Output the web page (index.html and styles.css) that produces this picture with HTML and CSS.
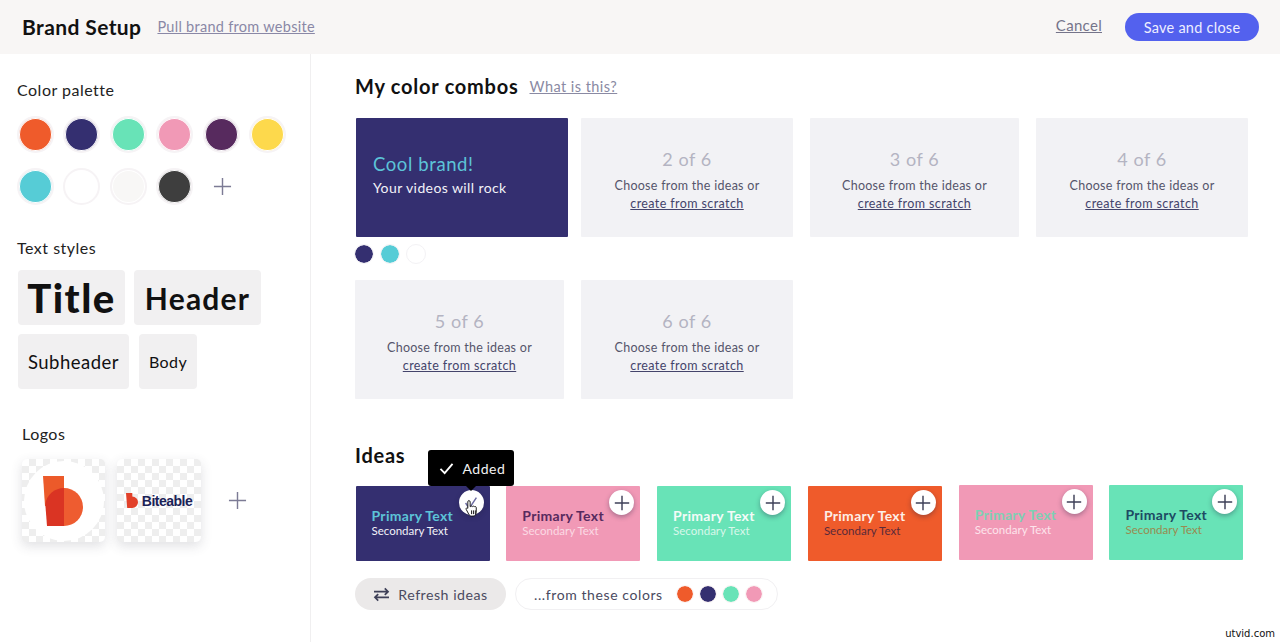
FILE: index.html
```html
<!DOCTYPE html>
<html lang="en">
<head>
    <meta charset="UTF-8">
    <meta name="viewport" content="width=device-width, initial-scale=1.0">
    <title>Brand Setup</title>
    <link rel="stylesheet" href="styles.css">
</head>
<body>
    <header class="topbar">
        <h1 class="topbar-title">Brand Setup</h1>
        <a class="topbar-link" href="#">Pull brand from website</a>
        <a class="topbar-cancel" href="#">Cancel</a>
        <button class="save-btn">Save and close</button>
    </header>
    <div class="page">
        <aside class="sidebar">
            <h2 class="side-title">Color palette</h2>
            <div class="palette">
                <span class="dot dot-orange"></span>
                <span class="dot dot-navy"></span>
                <span class="dot dot-mint"></span>
                <span class="dot dot-pink"></span>
                <span class="dot dot-plum"></span>
                <span class="dot dot-yellow"></span>
                <span class="dot dot-teal"></span>
                <span class="dot dot-white"></span>
                <span class="dot dot-offwhite"></span>
                <span class="dot dot-charcoal"></span>
                <svg class="plus-icon" viewBox="0 0 20 20"><path d="M10 1v18M1 10h18"/></svg>
            </div>
            <h2 class="side-title side-title-text">Text styles</h2>
            <div class="chips">
                <div class="chip chip-title">Title</div>
                <div class="chip chip-header">Header</div>
                <div class="chip chip-sub">Subheader</div>
                <div class="chip chip-body">Body</div>
            </div>
            <h2 class="side-title side-title-logos">Logos</h2>
            <div class="logos">
                <div class="logo-tile">
                    <div class="logo-round">
                        <svg class="logo-b" viewBox="0 0 40 50">
                            <path d="M0 0H21V30H2Z" fill="#ec5a2a"/>
                            <path d="M21 12A19 19 0 0 1 21 50Z" fill="#ee5c30"/>
                            <path d="M21 12A19 19 0 0 0 2.300 28L4 50H21Z" fill="#da3423"/>
                        </svg>
                    </div>
                </div>
                <div class="logo-tile logo-tile-wide">
                    <svg class="logo-mini" viewBox="0 0 40 50">
                        <path d="M0 0H21V12A19 19 0 0 1 21 50H4Z" fill="#e2412a"/>
                    </svg>
                    <span class="logo-word">Biteable</span>
                </div>
                <svg class="plus-icon plus-logos" viewBox="0 0 20 20"><path d="M10 1v18M1 10h18"/></svg>
            </div>
        </aside>
        <main class="content">
            <div class="heading-row">
                <h2 class="heading">My color combos</h2>
                <a class="heading-link" href="#">What is this?</a>
            </div>
            <div class="combo-row">
                <div class="combo-col">
                    <div class="combo combo-filled">
                        <div class="combo-primary">Cool brand!</div>
                        <div class="combo-secondary">Your videos will rock</div>
                    </div>
                    <div class="mini-dots">
                        <span class="mini-dot dot-navy"></span>
                        <span class="mini-dot dot-teal"></span>
                        <span class="mini-dot dot-white"></span>
                    </div>
                </div>
                <div class="combo combo-empty">
                    <div class="combo-count">2 of 6</div>
                    <p class="combo-hint">Choose from the ideas or<br><a href="#">create from scratch</a></p>
                </div>
                <div class="combo combo-empty combo-narrow">
                    <div class="combo-count">3 of 6</div>
                    <p class="combo-hint">Choose from the ideas or<br><a href="#">create from scratch</a></p>
                </div>
                <div class="combo combo-empty">
                    <div class="combo-count">4 of 6</div>
                    <p class="combo-hint">Choose from the ideas or<br><a href="#">create from scratch</a></p>
                </div>
            </div>
            <div class="combo-row combo-row-second">
                <div class="combo combo-empty combo-narrow">
                    <div class="combo-count">5 of 6</div>
                    <p class="combo-hint">Choose from the ideas or<br><a href="#">create from scratch</a></p>
                </div>
                <div class="combo combo-empty">
                    <div class="combo-count">6 of 6</div>
                    <p class="combo-hint">Choose from the ideas or<br><a href="#">create from scratch</a></p>
                </div>
            </div>
            <h2 class="heading heading-ideas">Ideas</h2>
            <div class="idea-row">
                <div class="idea idea-navy">
                    <div class="tooltip">
                        <svg class="tooltip-check" viewBox="0 0 16 14"><path d="M1.500 7.500l4.500 4.500 8.500-10"/></svg>
                        Added
                    </div>
                    <div class="idea-primary">Primary Text</div>
                    <div class="idea-secondary">Secondary Text</div>
                    <div class="idea-add">
                        <svg viewBox="0 0 20 20"><path class="added-check" d="M4 10l4 6 8-12"/></svg>
                    </div>
                    <svg class="hand-cursor" viewBox="0 0 16 20">
                        <path d="M4 1.500c1 0 1.500.7 1.500 1.500v5h.6c.3-.8 1.700-.8 2 0 .4-.7 1.700-.7 2 .1.500-.5 1.900-.3 1.900 1v5c0 2-1.200 4-3.300 4H7c-1.500 0-2.300-1-3-2L1.300 11c-.7-1.200.8-2.200 1.700-1.200V3c0-.8.400-1.500 1-1.500z" fill="#fff" stroke="#111" stroke-width="1"/>
                        <path d="M7 12v4M9 12v4M11 12v4" stroke="#111" stroke-width="1"/>
                    </svg>
                </div>
                <div class="idea idea-pink">
                    <div class="idea-primary text-plum">Primary Text</div>
                    <div class="idea-secondary text-lightpink">Secondary Text</div>
                    <div class="idea-add"><svg viewBox="0 0 20 20"><path d="M10 2v16M2 10h16"/></svg></div>
                </div>
                <div class="idea idea-mint">
                    <div class="idea-primary text-white">Primary Text</div>
                    <div class="idea-secondary text-lightmint">Secondary Text</div>
                    <div class="idea-add"><svg viewBox="0 0 20 20"><path d="M10 2v16M2 10h16"/></svg></div>
                </div>
                <div class="idea idea-orange">
                    <div class="idea-primary text-cream">Primary Text</div>
                    <div class="idea-secondary text-maroon">Secondary Text</div>
                    <div class="idea-add"><svg viewBox="0 0 20 20"><path d="M10 2v16M2 10h16"/></svg></div>
                </div>
                <div class="idea idea-pink idea-raised">
                    <div class="idea-primary text-mint">Primary Text</div>
                    <div class="idea-secondary text-lightpink2">Secondary Text</div>
                    <div class="idea-add"><svg viewBox="0 0 20 20"><path d="M10 2v16M2 10h16"/></svg></div>
                </div>
                <div class="idea idea-mint idea-raised">
                    <div class="idea-primary text-deep">Primary Text</div>
                    <div class="idea-secondary text-olive">Secondary Text</div>
                    <div class="idea-add"><svg viewBox="0 0 20 20"><path d="M10 2v16M2 10h16"/></svg></div>
                </div>
            </div>
            <div class="idea-tools">
                <button class="refresh-btn">
                    <svg viewBox="0 0 18 16"><path d="M1 5h15M12.500 1.500L16 5l-3.500 3.500M17 11H2M5.500 7.500L2 11l3.500 3.500"/></svg>
                    Refresh ideas
                </button>
                <div class="from-pill">
                    <span class="from-label">...from these colors</span>
                    <span class="from-dot dot-orange"></span>
                    <span class="from-dot dot-navy"></span>
                    <span class="from-dot dot-mint"></span>
                    <span class="from-dot dot-pink"></span>
                </div>
            </div>
        </main>
    </div>
    <div class="watermark">utvid.com</div>
</body>
</html>
```
FILE: styles.css
```css
*{
    margin: 0;
    padding: 0;
    box-sizing: border-box;
}
body{
    width: 100%;
    height: 642px;
    overflow: hidden;
    background-color: #fff;
    font-family: "Lato", "Noto Sans", sans-serif;
    color: #111;
    position: relative;
}
.topbar{
    height: 54px;
    background-color: #f8f6f5;
    display: flex;
    align-items: center;
    padding: 0 21px 0 22px;
}
.topbar-title{
    margin-top: -2px;
    font-size: 21px;
    font-weight: 700;
    letter-spacing: 0.4px;
    color: #111;
}
.topbar-link{
    margin: -2px 0 0 16px;
    font-size: 14.500px;
    letter-spacing: 0.28px;
    color: #8a88a6;
}
.topbar-cancel{
    margin: -4px 0 0 auto;
    font-size: 15px;
    letter-spacing: 0.3px;
    color: #75748a;
}
.save-btn{
    margin-left: 23px;
    width: 134px;
    height: 28px;
    border: 0;
    border-radius: 14px;
    background-color: #5361ee;
    color: #eef;
    font-family: inherit;
    font-size: 14.500px;
    letter-spacing: 0.25px;
}
.page{
    display: flex;
    height: 588px;
}
.sidebar{
    width: 311px;
    flex-shrink: 0;
    border-right: 1px solid #f0eff0;
    padding: 26px 0 0 17px;
}
.side-title{
    font-size: 16px;
    font-weight: 400;
    letter-spacing: 0.5px;
    line-height: 20px;
    color: #222;
}
.side-title-text{
    margin-top: 33px;
}
.side-title-logos{
    margin-top: 35px;
    margin-left: 5px;
}
.palette{
    margin-top: 16px;
    width: 280px;
    display: flex;
    flex-wrap: wrap;
    align-items: center;
    gap: 15px 9.400px;
}
.dot{
    width: 37px;
    height: 37px;
    border-radius: 50%;
    border: 2px solid #f6f3f5;
    background-clip: padding-box;
    box-shadow: inset 0 0 0 1px #fff;
}
.dot-orange{ background-color: #ef5b2b; }
.dot-navy{ background-color: #342f70; }
.dot-mint{ background-color: #68e3b7; }
.dot-pink{ background-color: #f199b6; }
.dot-plum{ background-color: #572a5e; }
.dot-yellow{ background-color: #fdd94c; }
.dot-teal{ background-color: #56ccd6; }
.dot-white{ background-color: #fff; }
.dot-offwhite{ background-color: #f8f7f6; }
.dot-charcoal{ background-color: #3e3e3e; }
.plus-icon{
    width: 19px;
    height: 19px;
    margin-left: 10px;
    fill: none;
    stroke: #7c7b95;
    stroke-width: 1.500;
}
.chips{
    margin: 12px 0 0 1px;
    width: 270px;
    display: flex;
    flex-wrap: wrap;
    gap: 9px;
}
.chip{
    height: 55px;
    border-radius: 4px;
    background-color: #f1f0f1;
    display: flex;
    align-items: center;
    justify-content: center;
    color: #111;
}
.chip-title{
    width: 107px;
    font-size: 40px;
    font-weight: 900;
    letter-spacing: 1.500px;
}
.chip-header{
    width: 127px;
    font-size: 30px;
    font-weight: 700;
    letter-spacing: 1.200px;
}
.chip-sub{
    width: 111px;
    font-size: 18.500px;
    letter-spacing: 0.5px;
}
.chip-body{
    width: 58px;
    margin-left: 1px;
    font-size: 16px;
    letter-spacing: 0.4px;
}
.logos{
    margin: 15px 0 0 5px;
    display: flex;
    align-items: center;
    gap: 12px;
}
.logo-tile{
    width: 83px;
    height: 83px;
    border-radius: 5px;
    background-color: #fff;
    background-image: repeating-conic-gradient(#eeeeee 0% 25%, #fff 0% 50%);
    background-size: 14px 14px;
    box-shadow: 0 4px 12px rgba(60, 60, 80, 0.16);
    display: flex;
    align-items: center;
    justify-content: center;
}
.logo-round{
    width: 80px;
    height: 80px;
    border-radius: 50%;
    background-color: #fff;
    display: flex;
    align-items: center;
    justify-content: center;
}
.logo-b{
    width: 40px;
    height: 50px;
    margin-left: -2px;
}
.logo-tile-wide{
    width: 84px;
    gap: 4px;
}
.logo-mini{
    width: 12px;
    height: 15px;
}
.logo-word{
    font-family: "Liberation Sans", sans-serif;
    font-size: 14px;
    font-weight: 700;
    letter-spacing: -0.5px;
    color: #1b2257;
}
.plus-logos{
    margin-left: 15px;
}
.content{
    flex: 1;
    padding: 19px 0 0 44px;
    min-width: 0;
}
.heading-row{
    display: flex;
    align-items: center;
    gap: 11px;
    height: 26px;
}
.heading{
    font-size: 20px;
    font-weight: 700;
    letter-spacing: 0.75px;
    color: #111;
}
.heading-link{
    font-size: 14.500px;
    letter-spacing: 0.45px;
    color: #8a8aa3;
}
.combo-row{
    margin-top: 19px;
    display: flex;
    gap: 17px;
    padding-left: 1px;
}
.combo-row-second{
    margin-top: 15px;
    padding-left: 0;
}
.combo-col{
    width: 212px;
    margin-right: -4px;
}
.combo{
    width: 212px;
    height: 119px;
    border-radius: 1px;
}
.combo-narrow{
    width: 209px;
}
.combo-filled{
    background-color: #342f70;
    padding: 35px 0 0 17px;
}
.combo-primary{
    font-size: 18.500px;
    letter-spacing: 0.6px;
    line-height: 23px;
    color: #5cc4d8;
}
.combo-secondary{
    margin-top: 1px;
    font-size: 14px;
    letter-spacing: 0.4px;
    line-height: 22px;
    color: #f2f2f8;
}
.mini-dots{
    margin: 6px 0 0 -2px;
    display: flex;
    gap: 6px;
    height: 22px;
    align-items: center;
}
.mini-dot{
    width: 20px;
    height: 20px;
    border-radius: 50%;
    border: 1px solid #f3f2f5;
    background-clip: padding-box;
}
.combo-empty{
    background-color: #f2f2f5;
    text-align: center;
    padding-top: 29px;
}
.combo-count{
    font-size: 18px;
    letter-spacing: 0.6px;
    line-height: 24px;
    color: #b4b4c2;
}
.combo-hint{
    margin-top: 6px;
    font-size: 12.500px;
    letter-spacing: 0.28px;
    line-height: 18px;
    color: #55556b;
}
.combo-hint a{
    letter-spacing: 0.4px;
    color: #44446b;
}
.heading-ideas{
    margin-top: 43px;
    line-height: 26px;
}
.idea-row{
    margin-top: 18px;
    padding-left: 0.5px;
    display: flex;
    gap: 16.800px;
}
.idea{
    position: relative;
    width: 134px;
    height: 75px;
    padding: 21px 0 0 16px;
    border-radius: 1px;
}
.idea-raised{
    margin-top: -1px;
}
.idea-navy{ background-color: #342f70; }
.idea-pink{ background-color: #f199b6; }
.idea-mint{ background-color: #68e3b7; }
.idea-orange{ background-color: #ef5b2b; }
.idea-primary{
    font-size: 14px;
    font-weight: 700;
    letter-spacing: 0.3px;
    line-height: 17px;
    color: #5cc4d8;
}
.idea-secondary{
    margin-top: -1px;
    font-size: 11.500px;
    line-height: 15px;
    color: #f2f2f8;
}
.text-plum{ color: #572a5e; }
.text-lightpink{ color: #fbd9e4; }
.text-white{ color: #f4fbf8; }
.text-lightmint{ color: #d8f7ea; }
.text-cream{ color: #fdeee6; }
.text-maroon{ color: #5a2a3a; }
.text-mint{ color: #7fcfb3; }
.text-lightpink2{ color: #fde4ec; }
.text-deep{ color: #1d4a63; }
.text-olive{ color: #9a8a50; }
.idea-add{
    position: absolute;
    top: 4px;
    right: 6px;
    width: 25px;
    height: 25px;
    border-radius: 50%;
    background-color: #fff;
    box-shadow: 0 2px 5px rgba(30, 30, 60, 0.35);
    display: flex;
    align-items: center;
    justify-content: center;
}
.idea-add svg{
    width: 18px;
    height: 18px;
    fill: none;
    stroke: #3e4058;
    stroke-width: 1.600;
}
.idea-add .added-check{
    stroke: #6a6aa0;
}
.hand-cursor{
    position: absolute;
    left: 109px;
    top: 13px;
    width: 15px;
    height: 19px;
}
.tooltip{
    position: absolute;
    left: 72px;
    top: -36px;
    width: 86px;
    height: 36px;
    border-radius: 3px;
    background-color: #000;
    color: #f2f2f2;
    font-size: 14px;
    letter-spacing: 0.5px;
    display: flex;
    align-items: center;
    gap: 9px;
    padding-left: 11px;
    z-index: 2;
}
.tooltip::after{
    content: "";
    position: absolute;
    left: 37px;
    bottom: -5px;
    border-left: 6px solid transparent;
    border-right: 6px solid transparent;
    border-top: 6px solid #000;
}
.tooltip-check{
    width: 15px;
    height: 13px;
    fill: none;
    stroke: #fff;
    stroke-width: 2;
}
.idea-tools{
    margin-top: 17px;
    display: flex;
    gap: 9px;
}
.refresh-btn{
    width: 151px;
    height: 32px;
    border: 0;
    border-radius: 16px;
    background-color: #ebe9e9;
    color: #4a4a60;
    font-family: inherit;
    font-size: 14.200px;
    letter-spacing: 0.5px;
    display: flex;
    align-items: center;
    justify-content: center;
    gap: 8px;
}
.refresh-btn svg{
    width: 17px;
    height: 15px;
    fill: none;
    stroke: #3e4058;
    stroke-width: 1.800;
}
.from-pill{
    width: 263px;
    height: 32px;
    border: 1px solid #f1f0f2;
    border-radius: 16px;
    display: flex;
    align-items: center;
    padding-left: 18px;
    gap: 5px;
}
.from-label{
    font-size: 14px;
    letter-spacing: 0.6px;
    color: #4a4a60;
    margin-right: 8px;
}
.from-dot{
    width: 18px;
    height: 18px;
    border-radius: 50%;
    border: 1px solid #fbf3f3;
    background-clip: padding-box;
}
.watermark{
    position: absolute;
    right: 5px;
    bottom: 3px;
    font-family: "DejaVu Sans", sans-serif;
    font-size: 10px;
    color: #111;
}
```
